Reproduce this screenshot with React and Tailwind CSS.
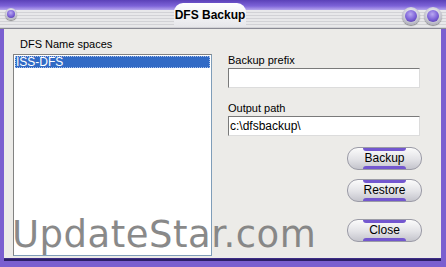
import React from 'react';

const Orb = ({ size = 17 }) => (
  <div
    className="rounded-full flex items-center justify-center shadow-[0_1px_1px_rgba(0,0,0,0.4)]"
    style={{ width: size, height: size }}
  >
    <div className="w-full h-full rounded-full bg-[radial-gradient(circle_at_50%_40%,#ffffff_0%,#d6d6de_45%,#8e8ca0_100%)] flex items-center justify-center">
      <div className="w-[62%] h-[62%] rounded-full bg-[radial-gradient(circle_at_45%_35%,#b9a8f2_0%,#7a5fd6_55%,#4a3297_100%)]" />
    </div>
  </div>
);

const BoneButton = ({ label }) => (
  <button className="relative w-[75px] h-[23px] rounded-[11px] bg-[linear-gradient(#fbfbfb,#e2e2e6_55%,#c4c4cc)] border border-[#9b9ba6] text-[12px] text-black leading-none flex items-center justify-center">
    <span className="absolute top-0 left-[15px] right-[15px] h-[3px] rounded-b-[3px] bg-[#7357cf]" />
    <span className="absolute bottom-0 left-[15px] right-[15px] h-[3px] rounded-t-[3px] bg-[#7357cf]" />
    <span className="relative -mt-[1px]">{label}</span>
  </button>
);

const App = () => {
  return (
    <div
      className="relative w-[446px] h-[267px] flex flex-col overflow-hidden bg-[#7a5fd0]"
      style={{ fontFamily: '"Liberation Sans", Arial, sans-serif' }}
    >
      {/* Title bar */}
      <div className="relative h-[29px] shrink-0 flex flex-col">
        <div className="h-[10px] bg-[linear-gradient(#5b41b8,#7d63d8_60%,#b6a6ee)]" />
        <div className="flex-1 bg-[repeating-linear-gradient(#e8e8ea_0px,#e8e8ea_2px,#d2d2d6_2px,#d2d2d6_3px)] border-b border-[#8a8a94]" />
        <div className="absolute left-[5px] top-[8px]">
          <Orb size={12} />
        </div>
        <div className="absolute left-[174px] top-[3px] w-[72px] h-[24px] rounded-t-[9px] bg-[linear-gradient(#ffffff,#e6e6ea)] flex items-center justify-center">
          <span className="text-[12px] font-bold text-black">DFS Backup</span>
        </div>
        <div className="absolute right-[4px] top-[7px] flex gap-[4px]">
          <Orb size={18} />
          <Orb size={18} />
        </div>
      </div>

      {/* Body */}
      <div className="flex-1 flex bg-[#ecebe8] ml-[4px] mr-[5px] mb-[8px] border-b border-[#3d2c85] shadow-[0_2px_0_#2b1f66]">
        <div className="w-[208px] flex flex-col pl-[9px] pt-[9px] pb-[2px]">
          <div className="text-[11px] text-black pl-[7px] h-[16px] leading-[12px]">DFS Name spaces</div>
          <div className="flex-1 bg-white border border-[#7f9db9] border-t-[#828282] border-l-[#828282] p-[1px]">
            <div className="h-[12px] bg-[#316ac5] outline-1 outline-dotted outline-[#a8c0ea] -outline-offset-1 text-white text-[12px] leading-[12px] pl-[1px]">
              ISS-DFS
            </div>
          </div>
        </div>

        <div className="flex-1 flex flex-col pl-[16px] pr-[21px] pt-[25px]">
          <div className="text-[11px] text-black h-[14px] leading-[12px]">Backup prefix</div>
          <div className="h-[20px] bg-white border border-[#dcdcdc] border-t-[#7a7a7a] border-l-[#7a7a7a]" />
          <div className="text-[11px] text-black h-[14px] leading-[12px] mt-[14px]">Output path</div>
          <div className="h-[20px] bg-white border border-[#dcdcdc] border-t-[#7a7a7a] border-l-[#7a7a7a] text-[12px] leading-[18px] pl-[1px]">
            c:\dfsbackup\
          </div>
          <div className="flex flex-col items-end mt-[11px] -mr-[2px]">
            <BoneButton label="Backup" />
            <div className="mt-[9px]">
              <BoneButton label="Restore" />
            </div>
            <div className="mt-[17px]">
              <BoneButton label="Close" />
            </div>
          </div>
        </div>
      </div>

      {/* watermark */}
      <div
        className="absolute left-[12px] top-[216px] text-[37px] leading-none text-[#7d7d7d] opacity-90 tracking-[0.5px]"
        style={{ fontFamily: '"DejaVu Sans", Verdana, sans-serif' }}
      >
        UpdateStar.com
      </div>
    </div>
  );
};

export default App;
